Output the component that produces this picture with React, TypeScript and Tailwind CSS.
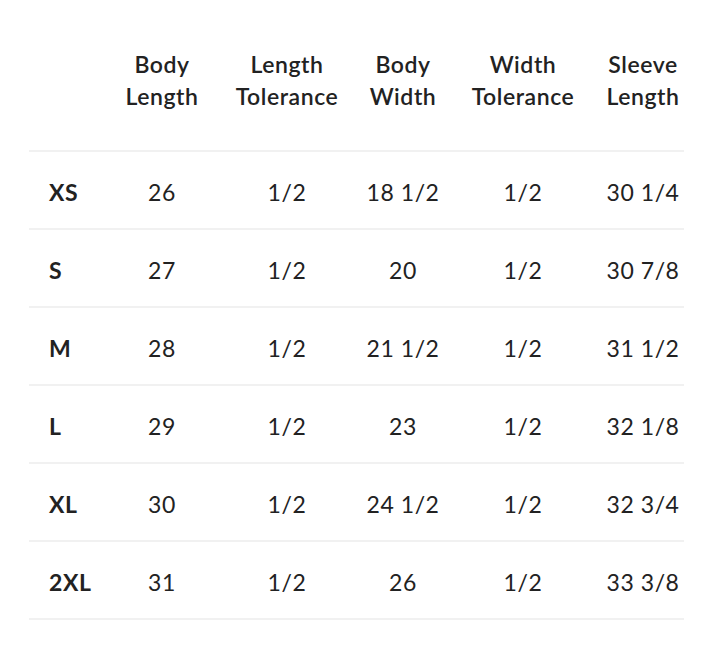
const headers = [
  ["Body", "Length"],
  ["Length", "Tolerance"],
  ["Body", "Width"],
  ["Width", "Tolerance"],
  ["Sleeve", "Length"],
];

const rows = [
  ["XS", "26", "1/2", "18 1/2", "1/2", "30 1/4"],
  ["S", "27", "1/2", "20", "1/2", "30 7/8"],
  ["M", "28", "1/2", "21 1/2", "1/2", "31 1/2"],
  ["L", "29", "1/2", "23", "1/2", "32 1/8"],
  ["XL", "30", "1/2", "24 1/2", "1/2", "32 3/4"],
  ["2XL", "31", "1/2", "26", "1/2", "33 3/8"],
];

const cols = "grid grid-cols-[83px_100px_150px_82px_158px_82px]";

export default function App() {
  return (
    <div
      className="w-[723px] h-[652px] bg-white text-[#222222] px-[29px] tracking-[0.035em]"
      style={{ fontFamily: "Lato, 'Open Sans', sans-serif" }}
    >
      <div className="w-[655px]">
        {/* header */}
        <div className={`${cols} h-[152px] pt-[48px] border-b-2 border-[#f1f1f1]`}>
          <div />
          {headers.map((h, i) => (
            <div key={i} className="text-center text-[23px] leading-[32px] font-semibold whitespace-nowrap">
              {h[0]}
              <br />
              {h[1]}
            </div>
          ))}
        </div>

        {rows.map((r) => (
          <div key={r[0]} className={`${cols} h-[78px] pt-[4px] items-center border-b-2 border-[#f1f1f1] text-[23px]`}>
            <div className="pl-[20px] font-bold">{r[0]}</div>
            {r.slice(1).map((v, i) => (
              <div key={i} className="text-center whitespace-nowrap">
                {v}
              </div>
            ))}
          </div>
        ))}
      </div>
    </div>
  );
}
